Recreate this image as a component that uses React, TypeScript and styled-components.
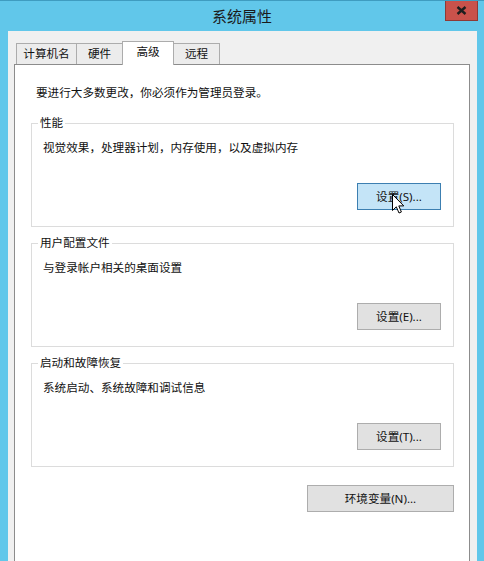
import React from "react";
import styled, { createGlobalStyle } from "styled-components";

const Global = createGlobalStyle`
  html, body { margin: 0; padding: 0; background: #61c7ea; }
  body { font-family: "Noto Sans", "Noto Sans CJK SC", sans-serif; color: #111; }
  * { box-sizing: border-box; }
`;

const Window = styled.div`
  width: 484px;
  height: 561px;
  overflow: hidden;
  background: #61c7ea;
  border-top: 1px solid #3f9cc0;
  display: flex;
  flex-direction: column;
`;

const TitleBar = styled.div`
  height: 30px;
  flex: none;
  display: grid;
  grid-template-columns: 1fr auto 1fr;
  align-items: center;
`;

const Title = styled.div`
  grid-column: 2;
  font-size: 15px;
  line-height: 20px;
  color: #1b1b1b;
`;

const CloseButton = styled.div`
  grid-column: 3;
  justify-self: end;
  align-self: start;
  margin-top: -1px;
  margin-right: 6px;
  width: 33px;
  height: 21px;
  background: #c9524b;
  border: 1px solid #8e3a36;
  border-top: none;
  display: flex;
  align-items: center;
  justify-content: center;
`;

const Client = styled.div`
  flex: 1;
  margin: 0 7px 0 8px;
  background: #f0f0f0;
  padding: 10px 7px 0 6px;
  display: flex;
  flex-direction: column;
`;

const TabStrip = styled.div`
  display: flex;
  align-items: flex-start;
  height: 24px;
  padding-left: 2px;
  margin-bottom: -1px;
  position: relative;
  z-index: 1;
`;

const Tab = styled.div<{ $w: number; $active?: boolean }>`
  width: ${(p) => p.$w}px;
  height: ${(p) => (p.$active ? 24 : 21)}px;
  margin-top: ${(p) => (p.$active ? 0 : 2)}px;
  margin-left: -1px;
  &:first-child { margin-left: 0; }
  border: 1px solid #acacac;
  border-bottom: none;
  background: ${(p) => (p.$active ? "#ffffff" : "#ececec")};
  position: relative;
  z-index: ${(p) => (p.$active ? 2 : 1)};
  display: flex;
  align-items: center;
  justify-content: center;
  padding-bottom: ${(p) => (p.$active ? 4 : 0)}px;
  font-size: 11.6px;
  line-height: 16px;
  color: #111;
`;

const Panel = styled.div`
  background: #ffffff;
  border: 1px solid #8c8c8c;
  padding: 20px 15px 60px 16px;
  display: flex;
  flex-direction: column;
`;

const Intro = styled.div`
  margin-left: 5px;
  font-size: 11.6px;
  line-height: 16px;
`;

const Group = styled.fieldset<{ $first?: boolean }>`
  margin: ${(p) => (p.$first ? 14 : 8)}px 0 0 0;
  border: 1px solid #dcdcdc;
  padding: 0 12px 16px 6px;
  min-width: 0;
`;

const Legend = styled.legend`
  padding: 0 2px;
  font-size: 11.6px;
  line-height: 16px;
  color: #111;
`;

const Desc = styled.div`
  margin: 9px 0 0 5px;
  font-size: 11.6px;
  line-height: 16px;
`;

const ButtonRow = styled.div<{ $gap: number }>`
  display: flex;
  justify-content: flex-end;
  margin-top: ${(p) => p.$gap}px;
`;

const Button = styled.div<{ $w: number; $hover?: boolean }>`
  position: relative;
  width: ${(p) => p.$w}px;
  height: 27px;
  background: ${(p) => (p.$hover ? "#c4e4f7" : "#e1e1e1")};
  border: 1px solid ${(p) => (p.$hover ? "#3c7fb1" : "#adadad")};
  display: flex;
  align-items: center;
  justify-content: center;
  font-size: 11.6px;
  line-height: 16px;
  color: #111;
`;

const Cursor = styled.svg`
  position: absolute;
  left: 34px;
  top: 10px;
`;

export default function App() {
  return (
    <>
      <Global />
      <Window>
        <TitleBar>
          <Title>系统属性</Title>
          <CloseButton>
            <svg width="11" height="9" viewBox="0 0 11 9">
              <path d="M1.5 1 L9.5 8 M9.5 1 L1.5 8" stroke="#1e1e1e" strokeWidth="2.4" />
            </svg>
          </CloseButton>
        </TitleBar>
        <Client>
          <TabStrip>
            <Tab $w={61}>计算机名</Tab>
            <Tab $w={47}>硬件</Tab>
            <Tab $w={52} $active>高级</Tab>
            <Tab $w={47}>远程</Tab>
          </TabStrip>
          <Panel>
            <Intro>要进行大多数更改，你必须作为管理员登录。</Intro>
            <Group $first>
              <Legend>性能</Legend>
              <Desc>视觉效果，处理器计划，内存使用，以及虚拟内存</Desc>
              <ButtonRow $gap={27}>
                <Button $w={84} $hover>
                  设置(S)...
                  <Cursor width="13" height="20" viewBox="0 0 13 20">
                    <path
                      d="M0.5 0.5 L0.5 16.5 L4.3 12.8 L7 19 L9.4 18 L6.8 11.9 L11.8 11.9 Z"
                      fill="#ffffff"
                      stroke="#000000"
                      strokeWidth="1"
                      strokeLinejoin="miter"
                    />
                  </Cursor>
                </Button>
              </ButtonRow>
            </Group>
            <Group>
              <Legend>用户配置文件</Legend>
              <Desc>与登录帐户相关的桌面设置</Desc>
              <ButtonRow $gap={27}>
                <Button $w={84}>设置(E)...</Button>
              </ButtonRow>
            </Group>
            <Group>
              <Legend>启动和故障恢复</Legend>
              <Desc>系统启动、系统故障和调试信息</Desc>
              <ButtonRow $gap={27}>
                <Button $w={84}>设置(T)...</Button>
              </ButtonRow>
            </Group>
            <ButtonRow $gap={18}>
              <Button $w={147}>环境变量(N)...</Button>
            </ButtonRow>
          </Panel>
        </Client>
      </Window>
    </>
  );
}
